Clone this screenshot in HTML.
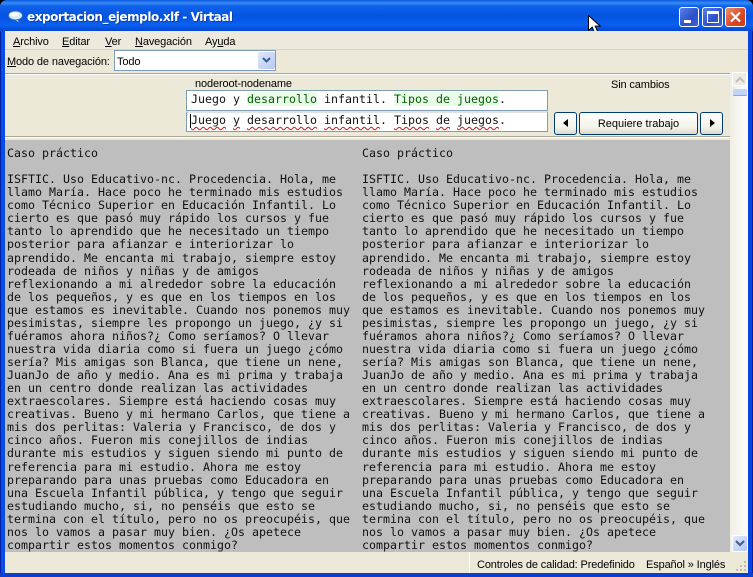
<!DOCTYPE html>
<html><head><meta charset="utf-8">
<style>
html,body{margin:0;padding:0;width:753px;height:577px;overflow:hidden;background:#000}
*{box-sizing:border-box}
.a{position:absolute}
body{font-family:"Liberation Sans","DejaVu Sans",sans-serif;font-size:11px;color:#000}
.ui{white-space:nowrap;font-size:11px;line-height:13px;letter-spacing:-.13px}
u{text-decoration:underline}
.mono{font-family:"DejaVu Sans Mono","Liberation Mono",monospace;font-size:11.63px;line-height:13.07px;white-space:pre;color:#111}
.btn{border:1px solid #003c74;border-radius:3px;background:linear-gradient(#fff,#f3f2ea 70%,#dcd8c8);text-align:center}
.edit{background:#fff;border:1px solid #7f9db9}
.g{color:#006400;background:#eafbea}
.w{text-decoration:underline wavy #e01010 1px;text-underline-offset:2px}
</style></head><body>
<div class="a" style="left:0;top:0;width:753px;height:577px;background:#0a4fe0;border-radius:7px 7px 0 0;overflow:hidden">
 <div class="a" style="left:0;top:0;width:753px;height:31px;background:linear-gradient(#0a58e0 0,#3a8cf6 3px,#0f62ea 6px,#0454e2 16px,#0a60f0 25px,#0446d0 31px)"></div>
 <div class="a" style="left:0;top:31px;width:5px;height:546px;background:#0a4ce8"></div>
 <div class="a" style="left:0;top:31px;width:1px;height:546px;background:#0020a0"></div>
 <div class="a" style="left:748px;top:31px;width:5px;height:546px;background:#0a45e0"></div>
 <div class="a" style="left:752px;top:31px;width:1px;height:546px;background:#0020a0"></div>
 <div class="a" style="left:0;top:573px;width:753px;height:4px;background:#0a3fd0"></div>
</div>
<svg class="a" style="left:7px;top:10px" width="17" height="14" viewBox="0 0 17 14"><ellipse cx="8.5" cy="5.5" rx="7" ry="4.5" fill="#d8ecff" stroke="#3a6fc0"/><ellipse cx="7" cy="4.2" rx="4.5" ry="2" fill="#fff"/><path d="M10.5 9.5l2.5 3.5-5-3z" fill="#d8ecff" stroke="#3a6fc0" stroke-width=".7"/></svg>
<div class="a" style="left:27px;top:10px;font:bold 12px/15px 'DejaVu Sans','Liberation Sans',sans-serif;color:#fff;white-space:nowrap;text-shadow:1px 1px 0 #0a3fb0;letter-spacing:-.45px">exportacion_ejemplo.xlf - Virtaal</div>

<div class="a" style="left:679px;top:7px;width:20px;height:20px;border:1px solid #fff;border-radius:3px;background:linear-gradient(135deg,#5a80e8,#2c50c8 60%,#3c64d8)"><div class="a" style="left:4px;top:12px;width:7px;height:3px;background:#fff"></div></div>
<div class="a" style="left:702px;top:7px;width:21px;height:20px;border:1px solid #fff;border-radius:3px;background:linear-gradient(135deg,#5a80e8,#2c50c8 60%,#3c64d8)"><div class="a" style="left:4px;top:3px;width:12px;height:12px;border:1px solid #fff;border-top:3px solid #fff"></div></div>
<div class="a" style="left:725px;top:7px;width:21px;height:20px;border:1px solid #fff;border-radius:3px;background:linear-gradient(135deg,#f09070,#dc4a28 55%,#c83c18)"><svg class="a" style="left:3px;top:3px" width="13" height="12"><path d="M2 1.5l9 9M11 1.5l-9 9" stroke="#fff" stroke-width="2.2"/></svg></div>
<svg class="a" style="left:587px;top:14px" width="14" height="24" viewBox="0 0 14 24"><path d="M1.5 1.5v15l3.7-3.4 3 7 3-1.3-3-6.7h5z" fill="#fff" stroke="#000"/></svg>

<div class="a" style="left:5px;top:31px;width:743px;height:542px;background:#ece9d8"></div>
<div class="a" style="left:5px;top:49px;width:743px;height:1px;background:#d8d4c0"></div>
<div class="a" style="left:5px;top:31px;width:743px;height:18px;background:#ede9dc"></div>

<div class="a ui" style="left:13px;top:36px"><u>A</u>rchivo</div>
<div class="a ui" style="left:62px;top:36px"><u>E</u>ditar</div>
<div class="a ui" style="left:105px;top:36px"><u>V</u>er</div>
<div class="a ui" style="left:135px;top:36px"><u>N</u>avegación</div>
<div class="a ui" style="left:205px;top:36px">Ay<u>u</u>da</div>
<div class="a ui" style="left:7px;top:56px"><u>M</u>odo de navegación:</div>
<div class="a" style="left:114px;top:50px;width:162px;height:21px;background:#fff;border:1px solid #7f9db9"></div>
<div class="a ui" style="left:117px;top:56px">Todo</div>
<div class="a" style="left:258px;top:52px;width:17px;height:17px;border-radius:2px;background:linear-gradient(135deg,#dfe9fb,#b6c8f0)"><svg class="a" style="left:4px;top:5px" width="9" height="7"><path d="M1 1l3.5 3.5L8 1" fill="none" stroke="#3c5a8c" stroke-width="2"/></svg></div>

<div class="a" style="left:5px;top:73px;width:725px;height:1px;background:#aca899"></div>
<div class="a" style="left:5px;top:74px;width:725px;height:1px;background:#fff"></div>
<div class="a" style="left:5px;top:136px;width:725px;height:1px;background:#aca899"></div>
<div class="a" style="left:5px;top:137px;width:725px;height:1px;background:#fff"></div>

<div class="a ui" style="left:195px;top:78px">noderoot-nodename</div>
<div class="a ui" style="left:611px;top:79px">Sin cambios</div>

<div class="a edit" style="left:186px;top:90px;width:362px;height:21px"></div>
<div class="a mono" style="left:191px;top:93px"><span>Juego y </span><span class="g">desarrollo</span><span> infantil. </span><span class="g">Tipos de juegos</span><span>.</span></div>
<div class="a edit" style="left:186px;top:111px;width:362px;height:21px;border-top:2px solid #dfe3e6"></div>
<div class="a mono" style="left:191px;top:114px"><span class="w">Juego</span> <span class="w">y</span> <span class="w">desarrollo</span> <span class="w">infantil</span>. <span class="w">Tipos</span> <span class="w">de</span> <span class="w">juegos</span>.</div>
<div class="a" style="left:190px;top:114px;width:1px;height:14px;background:#000"></div>

<div class="a btn" style="left:554px;top:112px;width:23px;height:23px"><svg class="a" style="left:7px;top:6px" width="7" height="9"><path d="M6 0v8L1 4z" fill="#000"/></svg></div>
<div class="a btn ui" style="left:579px;top:112px;width:119px;height:23px;line-height:23px;letter-spacing:0">Requiere trabajo</div>
<div class="a btn" style="left:700px;top:112px;width:23px;height:23px"><svg class="a" style="left:8px;top:6px" width="7" height="9"><path d="M1 0v8l5-4z" fill="#000"/></svg></div>

<div class="a" style="left:5px;top:140px;width:725px;height:412px;background:#bebebe"></div>
<div class="a mono" style="left:7px;top:147px">Caso práctico

ISFTIC. Uso Educativo-nc. Procedencia. Hola, me
llamo María. Hace poco he terminado mis estudios
como Técnico Superior en Educación Infantil. Lo
cierto es que pasó muy rápido los cursos y fue
tanto lo aprendido que he necesitado un tiempo
posterior para afianzar e interiorizar lo
aprendido. Me encanta mi trabajo, siempre estoy
rodeada de niños y niñas y de amigos
reflexionando a mi alrededor sobre la educación
de los pequeños, y es que en los tiempos en los
que estamos es inevitable. Cuando nos ponemos muy
pesimistas, siempre les propongo un juego, ¿y si
fuéramos ahora niños?¿ Como seríamos? O llevar
nuestra vida diaria como si fuera un juego ¿cómo
sería? Mis amigas son Blanca, que tiene un nene,
JuanJo de año y medio. Ana es mi prima y trabaja
en un centro donde realizan las actividades
extraescolares. Siempre está haciendo cosas muy
creativas. Bueno y mi hermano Carlos, que tiene a
mis dos perlitas: Valeria y Francisco, de dos y
cinco años. Fueron mis conejillos de indias
durante mis estudios y siguen siendo mi punto de
referencia para mi estudio. Ahora me estoy
preparando para unas pruebas como Educadora en
una Escuela Infantil pública, y tengo que seguir
estudiando mucho, si, no penséis que esto se
termina con el título, pero no os preocupéis, que
nos lo vamos a pasar muy bien. ¿Os apetece
compartir estos momentos conmigo?</div>
<div class="a mono" style="left:362px;top:147px">Caso práctico

ISFTIC. Uso Educativo-nc. Procedencia. Hola, me
llamo María. Hace poco he terminado mis estudios
como Técnico Superior en Educación Infantil. Lo
cierto es que pasó muy rápido los cursos y fue
tanto lo aprendido que he necesitado un tiempo
posterior para afianzar e interiorizar lo
aprendido. Me encanta mi trabajo, siempre estoy
rodeada de niños y niñas y de amigos
reflexionando a mi alrededor sobre la educación
de los pequeños, y es que en los tiempos en los
que estamos es inevitable. Cuando nos ponemos muy
pesimistas, siempre les propongo un juego, ¿y si
fuéramos ahora niños?¿ Como seríamos? O llevar
nuestra vida diaria como si fuera un juego ¿cómo
sería? Mis amigas son Blanca, que tiene un nene,
JuanJo de año y medio. Ana es mi prima y trabaja
en un centro donde realizan las actividades
extraescolares. Siempre está haciendo cosas muy
creativas. Bueno y mi hermano Carlos, que tiene a
mis dos perlitas: Valeria y Francisco, de dos y
cinco años. Fueron mis conejillos de indias
durante mis estudios y siguen siendo mi punto de
referencia para mi estudio. Ahora me estoy
preparando para unas pruebas como Educadora en
una Escuela Infantil pública, y tengo que seguir
estudiando mucho, si, no penséis que esto se
termina con el título, pero no os preocupéis, que
nos lo vamos a pasar muy bien. ¿Os apetece
compartir estos momentos conmigo?</div>

<div class="a" style="left:730px;top:72px;width:18px;height:480px;background:linear-gradient(90deg,#f0eee6,#fdfdfb)"></div>
<div class="a" style="left:732px;top:72px;width:15px;height:14px;background:#eeede5;border:1px solid #fff;border-radius:2px"><svg class="a" style="left:2px;top:3px" width="10" height="7"><path d="M1 6l4-4 4 4" fill="none" stroke="#c4c2b8" stroke-width="2.2"/></svg></div>
<div class="a" style="left:733px;top:89px;width:14px;height:7px;background:#c2d3fc;border-bottom:1px solid #8ea6e0;border-radius:1px"></div>
<div class="a" style="left:732px;top:535px;width:16px;height:17px;background:linear-gradient(135deg,#e1eafe,#b4c8f6);border:1px solid #fff;border-radius:2px"><svg class="a" style="left:2px;top:4px" width="10" height="7"><path d="M1 1l4 4 4-4" fill="none" stroke="#4d6185" stroke-width="2.2"/></svg></div>

<div class="a" style="left:5px;top:552px;width:743px;height:21px;background:#ece9d8"></div>
<div class="a" style="left:469px;top:552px;width:1px;height:21px;background:#fff"></div>
<div class="a ui" style="left:477px;top:559px">Controles de calidad: Predefinido</div>
<div class="a ui" style="left:646px;top:559px">Español » Inglés</div>
<svg class="a" style="left:735px;top:561px" width="12" height="12"><g fill="#c0bcaa"><rect x="9" y="0" width="2" height="2"/><rect x="5" y="4" width="2" height="2"/><rect x="9" y="4" width="2" height="2"/><rect x="1" y="8" width="2" height="2"/><rect x="5" y="8" width="2" height="2"/><rect x="9" y="8" width="2" height="2"/></g></svg>
</body></html>
